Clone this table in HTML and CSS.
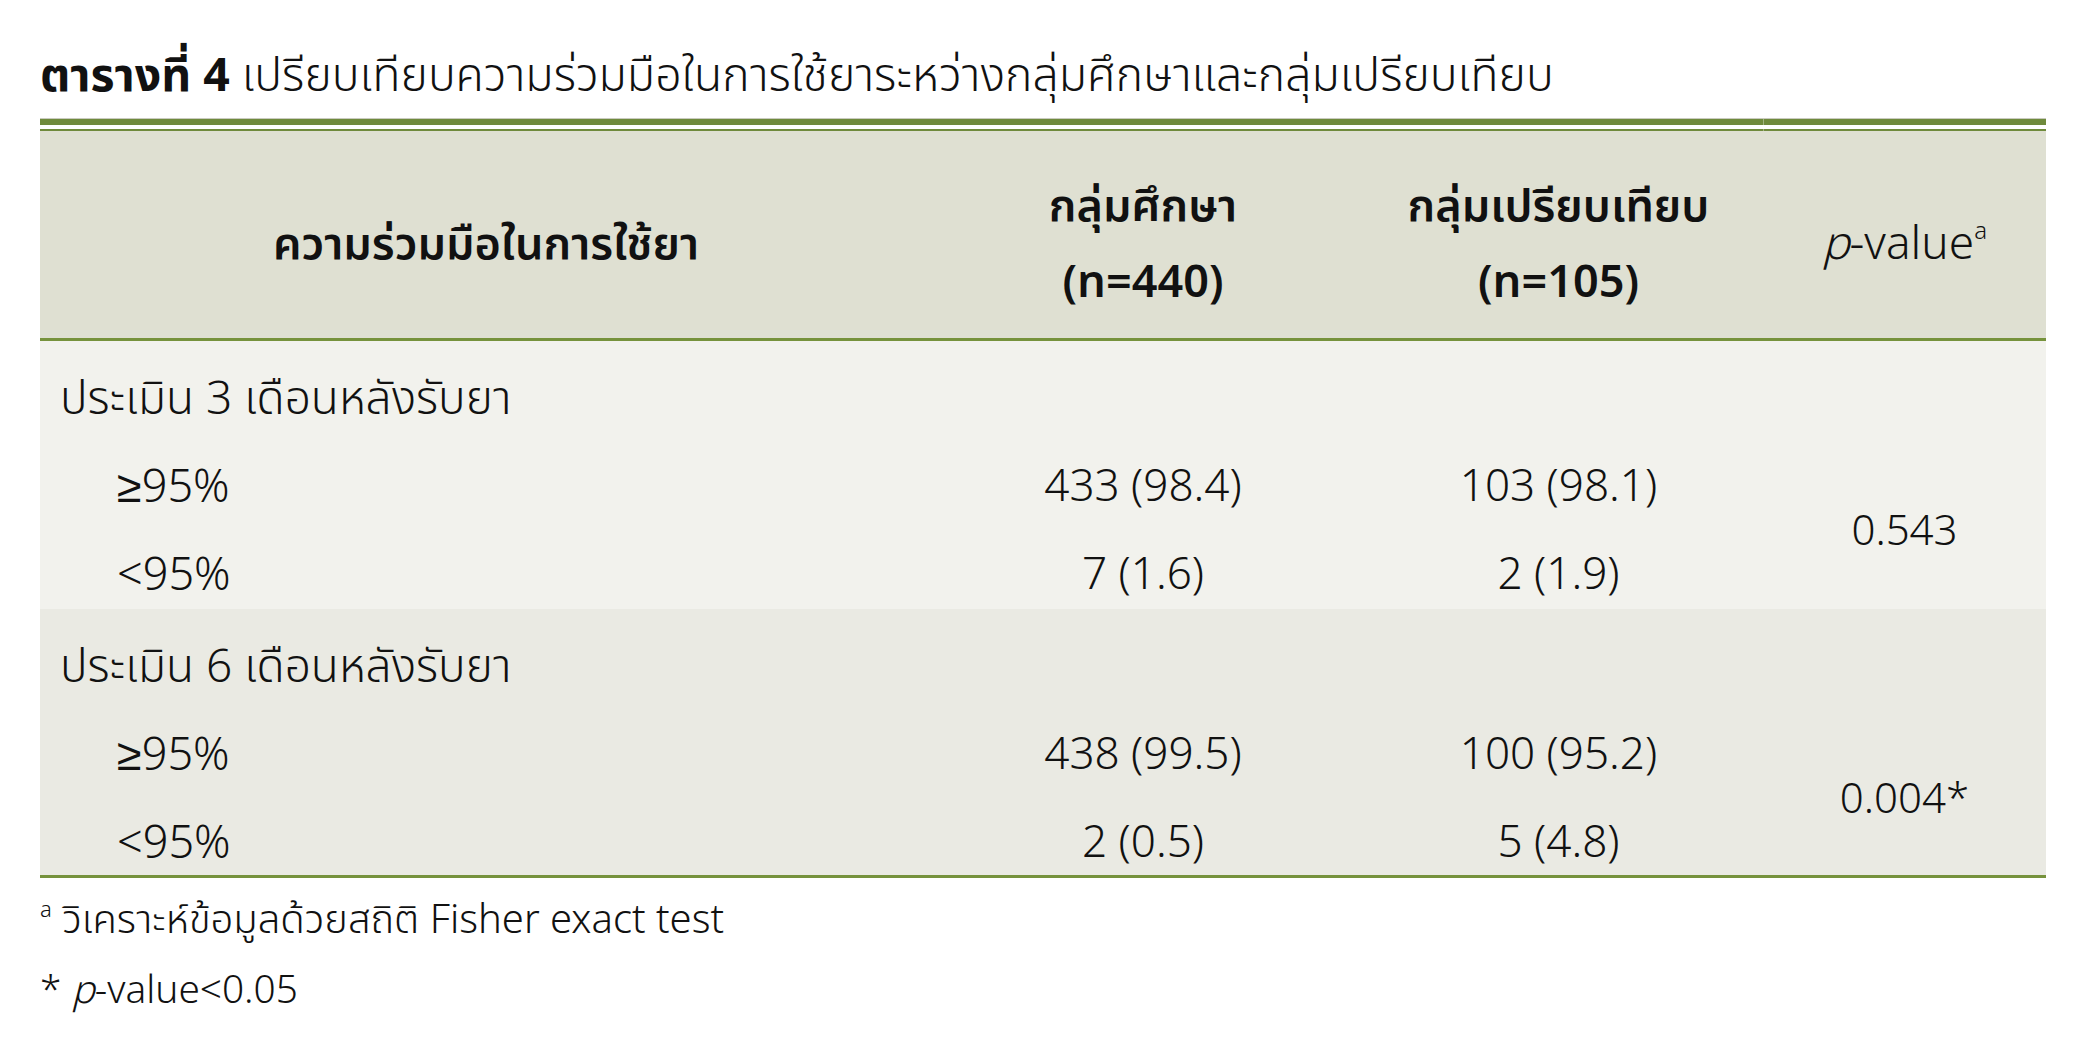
FILE: index.html
```html
<!DOCTYPE html>
<html lang="th">
<head>
<meta charset="utf-8">
<title>ตารางที่ 4</title>
<link rel="stylesheet" href="styles.css">
</head>
<body>
<main class="page">
  <h1 class="title"><b>ตารางที่ 4</b> เปรียบเทียบความร่วมมือในการใช้ยาระหว่างกลุ่มศึกษาและกลุ่มเปรียบเทียบ</h1>
  <section class="table">
    <div class="rules">
      <div class="rule-thick"></div>
      <div class="rule-thin"></div>
    </div>
    <div class="head">
      <div class="hc">ความร่วมมือในการใช้ยา</div>
      <div class="hc">กลุ่มศึกษา<br>(n=440)</div>
      <div class="hc">กลุ่มเปรียบเทียบ<br>(n=105)</div>
      <div class="hc pval"><i>p</i>-value<sup>a</sup></div>
    </div>
    <div class="group g1">
      <div class="lab">ประเมิน 3 เดือนหลังรับยา</div>
      <div class="sub r2">≥95%</div>
      <div class="num r2">433 (98.4)</div>
      <div class="num r2">103 (98.1)</div>
      <div class="pv">0.543</div>
      <div class="sub r3">&lt;95%</div>
      <div class="num r3">7 (1.6)</div>
      <div class="num r3">2 (1.9)</div>
    </div>
    <div class="group g2">
      <div class="lab">ประเมิน 6 เดือนหลังรับยา</div>
      <div class="sub r2">≥95%</div>
      <div class="num r2">438 (99.5)</div>
      <div class="num r2">100 (95.2)</div>
      <div class="pv">0.004*</div>
      <div class="sub r3">&lt;95%</div>
      <div class="num r3">2 (0.5)</div>
      <div class="num r3">5 (4.8)</div>
    </div>
  </section>
  <p class="note"><sup>a</sup> วิเคราะห์ข้อมูลด้วยสถิติ Fisher exact test</p>
  <p class="note n2"><span>*</span> <i>p</i>-value&lt;0.05</p>
</main>
</body>
</html>
```
FILE: styles.css
```css
html, body {
  margin: 0;
  padding: 0;
  background: #ffffff;
}
body {
  font-family: "Noto Sans Thai", "Liberation Sans", "Noto Sans", sans-serif;
  color: #111111;
}
.page {
  padding: 47px 31px 0 40px;
}
.title {
  margin: 0;
  font-size: 46.4px;
  font-weight: 300;
  line-height: 60px;
  height: 71px;
  white-space: nowrap;
}
.title b {
  font-weight: bold;
}
.table {
  display: flex;
  flex-direction: column;
}
.rules {
  border-top: 1px solid #c9cbbf;
  position: relative;
}
.rules::after {
  content: "";
  position: absolute;
  top: 0;
  bottom: 0;
  left: 1723px;
  width: 1px;
  background: rgba(255, 255, 255, 0.35);
}
.rule-thick {
  height: 6px;
  background: #6f8a3c;
}
.rule-thin {
  height: 2px;
  margin-top: 4px;
  background: #6f8a3c;
}
.head,
.group {
  display: grid;
  grid-template-columns: 892px 422px 409px 283px;
}
.head {
  height: 207px;
  background: #dfe0d2;
  border-bottom: 3px solid #76923c;
  align-items: center;
  font-size: 45px;
  font-weight: 650;
  line-height: 76px;
  text-align: center;
}
.hc {
  padding-top: 20px;
}
.pval {
  font-weight: 350;
  font-size: 46px;
}
.hc sup {
  font-size: 24px;
  line-height: 0;
  vertical-align: 20px;
}
.group {
  grid-template-rows: 62px 62px 62px;
  row-gap: 26px;
  padding: 28px 0 0;
  height: 240px;
  font-size: 44px;
  font-weight: 300;
  line-height: 62px;
}
.g1 {
  background: #f2f2ed;
}
.g2 {
  background: #eaeae3;
  height: 238px;
  border-bottom: 3px solid #76923c;
}
.lab {
  grid-column: 1;
  grid-row: 1;
  padding-left: 20px;
  font-size: 46px;
}
.sub {
  grid-column: 1;
  padding-left: 77px;
  font-size: 45px;
}
.r2 { grid-row: 2; }
.r3 { grid-row: 3; }
.num {
  text-align: center;
}
.pv {
  grid-column: 4;
  grid-row: 2 / 4;
  align-self: center;
  text-align: center;
  font-size: 42px;
}
.note {
  margin: 0;
  font-size: 40px;
  font-weight: 300;
  line-height: 70px;
  white-space: nowrap;
}
.note sup {
  font-size: 22px;
  line-height: 0;
  vertical-align: 16px;
}
.note:first-of-type {
  margin-top: 8px;
}
.n2 {
  font-size: 38.8px;
}
```
